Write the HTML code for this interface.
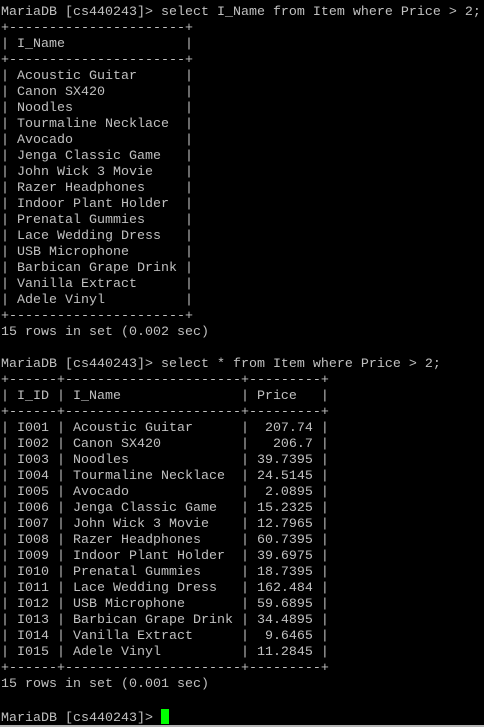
<!DOCTYPE html>
<html><head><style>
html,body{margin:0;padding:0;background:#000;width:484px;height:727px;overflow:hidden;position:relative}
pre{margin:0;position:absolute;left:1px;top:5px;font-family:"Liberation Mono",monospace;font-size:13.33px;line-height:16px;color:#c0c0c0;white-space:pre}
.cur{display:inline-block;width:8px;height:15px;background:#00ff00;vertical-align:-3px}
.bar{position:absolute;left:0;right:0;top:725px;height:2px;background:#b4b4b4}
</style></head><body>
<pre>MariaDB [cs440243]&gt; select I_Name from Item where Price &gt; 2;
+----------------------+
| I_Name               |
+----------------------+
| Acoustic Guitar      |
| Canon SX420          |
| Noodles              |
| Tourmaline Necklace  |
| Avocado              |
| Jenga Classic Game   |
| John Wick 3 Movie    |
| Razer Headphones     |
| Indoor Plant Holder  |
| Prenatal Gummies     |
| Lace Wedding Dress   |
| USB Microphone       |
| Barbican Grape Drink |
| Vanilla Extract      |
| Adele Vinyl          |
+----------------------+
15 rows in set (0.002 sec)

MariaDB [cs440243]&gt; select * from Item where Price &gt; 2;
+------+----------------------+---------+
| I_ID | I_Name               | Price   |
+------+----------------------+---------+
| I001 | Acoustic Guitar      |  207.74 |
| I002 | Canon SX420          |   206.7 |
| I003 | Noodles              | 39.7395 |
| I004 | Tourmaline Necklace  | 24.5145 |
| I005 | Avocado              |  2.0895 |
| I006 | Jenga Classic Game   | 15.2325 |
| I007 | John Wick 3 Movie    | 12.7965 |
| I008 | Razer Headphones     | 60.7395 |
| I009 | Indoor Plant Holder  | 39.6975 |
| I010 | Prenatal Gummies     | 18.7395 |
| I011 | Lace Wedding Dress   | 162.484 |
| I012 | USB Microphone       | 59.6895 |
| I013 | Barbican Grape Drink | 34.4895 |
| I014 | Vanilla Extract      |  9.6465 |
| I015 | Adele Vinyl          | 11.2845 |
+------+----------------------+---------+
15 rows in set (0.001 sec)

MariaDB [cs440243]&gt; <span class="cur"></span></pre>
<div class="bar"></div>
</body></html>
